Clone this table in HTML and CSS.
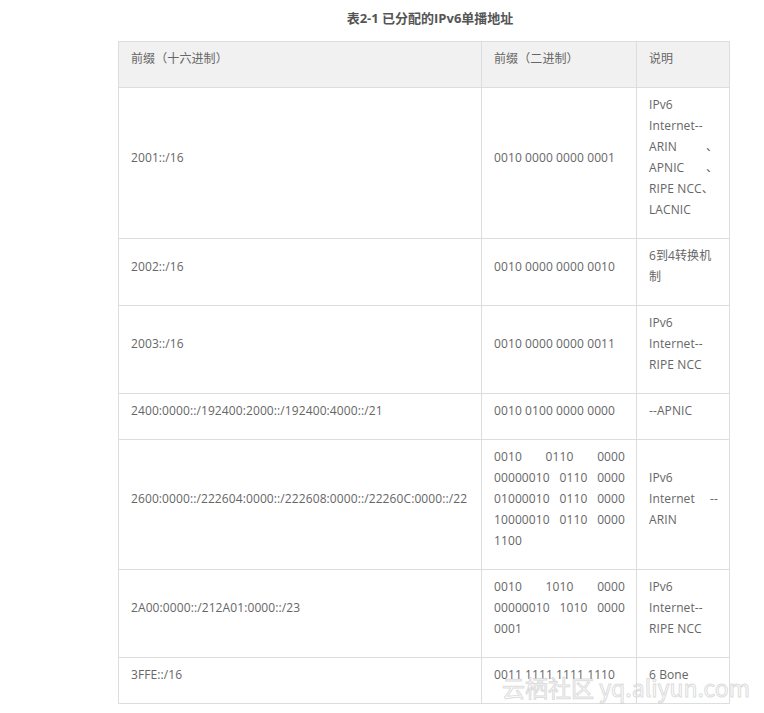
FILE: index.html
```html
<!DOCTYPE html>
<html lang="zh-CN">
<head>
<meta charset="utf-8">
<title>表2-1 已分配的IPv6单播地址</title>
<link rel="stylesheet" href="styles.css">
</head>
<body>
<div class="page">
  <p class="caption">表2-1 已分配的IPv6单播地址</p>
  <table class="addr">
    <colgroup>
      <col class="c-hex">
      <col class="c-bin">
      <col class="c-note">
    </colgroup>
    <thead>
      <tr><th>前缀（十六进制）</th><th>前缀（二进制）</th><th>说明</th></tr>
    </thead>
    <tbody>
      <tr>
        <td>2001::/16</td>
        <td>0010 0000 0000 0001</td>
        <td><span class="ln">IPv6</span><span class="ln">Internet--</span><span class="ln j">ARIN 、</span><span class="ln j">APNIC 、</span><span class="ln">RIPE NCC、</span><span class="ln">LACNIC</span></td>
      </tr>
      <tr>
        <td>2002::/16</td>
        <td>0010 0000 0000 0010</td>
        <td><span class="ln">6到4转换机</span><span class="ln">制</span></td>
      </tr>
      <tr>
        <td>2003::/16</td>
        <td>0010 0000 0000 0011</td>
        <td><span class="ln">IPv6</span><span class="ln">Internet--</span><span class="ln">RIPE NCC</span></td>
      </tr>
      <tr>
        <td>2400:0000::/192400:2000::/192400:4000::/21</td>
        <td>0010 0100 0000 0000</td>
        <td>--APNIC</td>
      </tr>
      <tr>
        <td>2600:0000::/222604:0000::/222608:0000::/22260C:0000::/22</td>
        <td><span class="ln j">0010 0110 0000</span><span class="ln j">00000010 0110 0000</span><span class="ln j">01000010 0110 0000</span><span class="ln j">10000010 0110 0000</span><span class="ln">1100</span></td>
        <td><span class="ln">IPv6</span><span class="ln j">Internet --</span><span class="ln">ARIN</span></td>
      </tr>
      <tr>
        <td>2A00:0000::/212A01:0000::/23</td>
        <td><span class="ln j">0010 1010 0000</span><span class="ln j">00000010 1010 0000</span><span class="ln">0001</span></td>
        <td><span class="ln">IPv6</span><span class="ln">Internet--</span><span class="ln">RIPE NCC</span></td>
      </tr>
      <tr>
        <td>3FFE::/16</td>
        <td>0011 1111 1111 1110</td>
        <td>6 Bone</td>
      </tr>
    </tbody>
  </table>
</div>
<div class="watermark">云栖社区 yq.aliyun.com</div>
</body>
</html>
```

FILE: styles.css
```css
html, body {
  margin: 0;
  padding: 0;
  background: #ffffff;
}

body {
  width: 764px;
  height: 713px;
  position: relative;
  overflow: hidden;
  font-family: "Open Sans", "Noto Sans CJK SC", sans-serif;
  font-size: 12px;
  color: #666666;
}

.page {
  margin-left: 118px;
  width: 624px;
}

.caption {
  margin: 0;
  padding-top: 8px;
  height: 41px;
  line-height: 21px;
  text-align: center;
  font-size: 13px;
  font-weight: bold;
  color: #555555;
  box-sizing: border-box;
}

.addr {
  border-collapse: collapse;
  width: 611px;
  table-layout: fixed;
  border: 1px solid #dddddd;
}

.c-hex { width: 363px; }
.c-bin { width: 155px; }
.c-note { width: 93px; }

.addr th,
.addr td {
  border: 1px solid #dddddd;
  padding: 6px 11px 18px 12px;
  line-height: 21px;
  text-align: left;
  vertical-align: middle;
  font-weight: normal;
  color: #666666;
  white-space: nowrap;
  letter-spacing: 0.1px;
}

.addr th {
  background: #f1f1f1;
  vertical-align: top;
}

.ln {
  display: block;
  text-align: left;
}

.ln.j {
  text-align: justify;
  text-align-last: justify;
}

.watermark {
  position: absolute;
  left: 502px;
  top: 672px;
  font-family: "Noto Sans CJK SC", "Open Sans", sans-serif;
  font-size: 23px;
  line-height: 30px;
  color: rgba(255, 255, 255, 0.85);
  -webkit-text-stroke: 1px rgba(190, 190, 190, 0.55);
  white-space: nowrap;
}
```
